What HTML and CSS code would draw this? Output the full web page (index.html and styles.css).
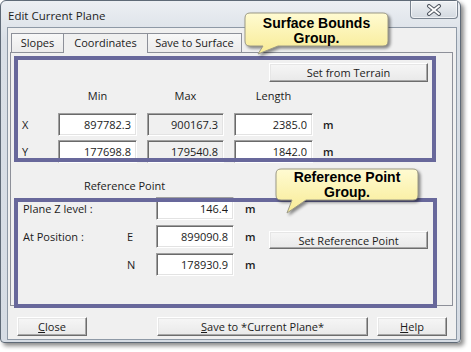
FILE: index.html
```html
<!DOCTYPE html>
<html lang="en">
<head>
    <meta charset="UTF-8">
    <title>Edit Current Plane</title>
    <link rel="stylesheet" href="styles.css">
</head>
<body>
<div class="stage">
    <div class="window">
        <div class="titlebar">
            <span class="title">Edit Current Plane</span>
            <div class="close-btn">
                <svg width="16" height="12" viewBox="0 0 16 12">
                    <path d="M3 2 L13 10 M13 2 L3 10" stroke="#4f5660" stroke-width="4" stroke-linecap="round"/>
                    <path d="M3 2 L13 10 M13 2 L3 10" stroke="#fff" stroke-width="2" stroke-linecap="round"/>
                </svg>
            </div>
        </div>

        <div class="client">
            <div class="tabs">
                <span class="tab tab-slopes">Slopes</span>
                <span class="tab tab-coords active">Coordinates</span>
                <span class="tab tab-save">Save to Surface</span>
            </div>

            <div class="panel">
                <div class="terrain-row">
                    <button class="btn btn-terrain">Set from Terrain</button>
                </div>

                <!-- surface bounds -->
                <div class="bounds">
                    <span></span>
                    <span class="head">Min</span>
                    <span class="head">Max</span>
                    <span class="head">Length</span>
                    <span></span>

                    <span class="axis">X</span>
                    <input class="field" value="897782.3" readonly>
                    <input class="field off" value="900167.3" readonly>
                    <input class="field" value="2385.0" readonly>
                    <span class="unit">m</span>

                    <span class="axis">Y</span>
                    <input class="field" value="177698.8" readonly>
                    <input class="field off" value="179540.8" readonly>
                    <input class="field" value="1842.0" readonly>
                    <span class="unit">m</span>
                </div>

                <div class="ref-title">Reference Point</div>

                <!-- reference point -->
                <div class="ref">
                    <span class="ref-label wide">Plane Z level :</span>
                    <input class="field" value="146.4" readonly>
                    <span class="unit">m</span>
                    <span></span>

                    <span class="ref-label">At Position :</span>
                    <span class="coord">E</span>
                    <input class="field" value="899090.8" readonly>
                    <span class="unit">m</span>
                    <button class="btn btn-ref">Set Reference Point</button>

                    <span></span>
                    <span class="coord">N</span>
                    <input class="field" value="178930.9" readonly>
                    <span class="unit">m</span>
                    <span></span>
                </div>
            </div>

            <div class="footer">
                <button class="btn btn-small"><u>C</u>lose</button>
                <button class="btn btn-save"><u>S</u>ave to *Current Plane*</button>
                <button class="btn btn-small"><u>H</u>elp</button>
            </div>
        </div>
    </div>

    <!-- annotations drawn over the dialog -->
    <div class="mark mark-bounds"></div>
    <div class="mark mark-ref"></div>

    <svg class="callout-shape callout-1" width="152" height="48" viewBox="0 0 152 48">
        <defs>
            <linearGradient id="note1" x1="0" y1="0" x2="0" y2="1">
                <stop offset="0" stop-color="#fffbd2"/>
                <stop offset="1" stop-color="#f8eb94"/>
            </linearGradient>
        </defs>
        <path d="M7 2 H140 Q145 2 145 7 V30 Q145 35 140 35 H35 L15 43 L20 35 H7 Q2 35 2 30 V7 Q2 2 7 2 Z" fill="url(#note1)" stroke="#9c9a86" stroke-width="1"/>
    </svg>
    <div class="callout-text text-1">Surface Bounds<br>Group.</div>

    <svg class="callout-shape callout-2" width="152" height="50" viewBox="0 0 152 50">
        <defs>
            <linearGradient id="note2" x1="0" y1="0" x2="0" y2="1">
                <stop offset="0" stop-color="#fffbd2"/>
                <stop offset="1" stop-color="#f8eb94"/>
            </linearGradient>
        </defs>
        <path d="M7 2 H139 Q144 2 144 7 V28 Q144 33 139 33 H32 L13 46 L18 33 H7 Q2 33 2 28 V7 Q2 2 7 2 Z" fill="url(#note2)" stroke="#9c9a86" stroke-width="1"/>
    </svg>
    <div class="callout-text text-2">Reference Point<br>Group.</div>
</div>
</body>
</html>
```

FILE: styles.css
```css
* {
    box-sizing: border-box;
}
body {
    margin: 0;
    background: #fff;
    font-family: "Open Sans", "Liberation Sans", sans-serif;
    font-size: 11px;
    color: #1b1b1b;
}
.stage {
    position: relative;
    width: 471px;
    height: 352px;
}
.window {
    width: 461px;
    height: 343px;
    border: 1px solid #5f6a77;
    border-radius: 6px 6px 4px 4px;
    background: linear-gradient(#eceff3, #d9dfe6 40px, #d6dce4);
    padding: 0 3px 2px 6px;
    box-shadow: 3px 3px 4px rgba(0,0,0,0.45);
}
.titlebar {
    height: 26px;
    display: flex;
    justify-content: space-between;
    align-items: flex-start;
}
.title {
    padding: 8px 0 0 1px;
    font-size: 11.5px;
    line-height: 14px;
    color: #1e1e1e;
}
.close-btn {
    width: 48px;
    height: 18px;
    margin-right: -1px;
    border: 1px solid #7a8490;
    border-top: none;
    border-radius: 0 0 4px 4px;
    background: linear-gradient(#eef1f4, #d3d9e0);
    box-shadow: inset 0 0 0 1px rgba(255,255,255,0.6);
    display: flex;
    align-items: center;
    justify-content: center;
}
.client {
    height: 313px;
    border: 1px solid #8e99a6;
    background: #f0f0f0;
    padding: 5px 2px 0 2px;
}
.tabs {
    display: flex;
    height: 19px;
    margin-left: 1px;
}
.tab {
    height: 19px;
    line-height: 18px;
    text-align: center;
    border: 1px solid #8d9099;
    border-bottom: none;
    background: linear-gradient(#f8f8f8, #ebebeb);
    margin-left: -1px;
}
.tab:first-child {
    margin-left: 0;
}
.tab-slopes {
    width: 53px;
}
.tab-coords {
    width: 85px;
}
.tab-save {
    width: 95px;
}
.tab.active {
    position: relative;
    z-index: 1;
    height: 20px;
    background: #f0f0f0;
}
.panel {
    width: 443px;
    height: 254px;
    border: 1px solid #8d9099;
    background: #f0f0f0;
}
.btn {
    font-family: inherit;
    font-size: 11px;
    color: #1b1b1b;
    height: 19px;
    padding: 0;
    border: 1px solid;
    border-color: #fff #6d6d6d #6d6d6d #fff;
    background: linear-gradient(#f6f6f6, #e9e9e9);
    box-shadow: inset -1px -1px 0 #a8a8a8, inset 1px 1px 0 #e6e6e6;
}
.terrain-row {
    display: flex;
    justify-content: flex-end;
    padding-right: 24px;
    margin-top: 10px;
}
.btn-terrain {
    width: 159px;
}
.bounds {
    display: grid;
    grid-template-columns: 37px 79px 77px 79px auto;
    column-gap: 10px;
    row-gap: 4px;
    margin-top: 7px;
    align-items: center;
}
.head {
    text-align: center;
    line-height: 14px;
    margin-bottom: 6px;
}
.axis {
    padding-left: 11px;
}
.unit {
    font-weight: 600;
}
.field {
    font-family: inherit;
    font-size: 11px;
    color: #1b1b1b;
    width: 100%;
    height: 23px;
    text-align: right;
    padding: 0 5px 0 0;
    border: 1px solid;
    border-color: #a0a0a0 #fff #fff #a0a0a0;
    box-shadow: inset 1px 1px 0 #6a6a6a, inset -1px -1px 0 #e3e3e3;
    background: #fff;
    outline: none;
}
.field.off {
    background: #f0f0f0;
}
.ref-title {
    width: 227px;
    margin-top: 16px;
    text-align: center;
    line-height: 14px;
}
.ref {
    display: grid;
    grid-template-columns: 116px 29px 78px 35px 159px;
    grid-auto-rows: 23px;
    row-gap: 5px;
    margin-top: 4px;
    align-items: center;
}
.ref-label {
    padding-left: 12px;
}
.ref-label.wide {
    grid-column: 1 / span 2;
}
.ref .unit {
    padding-left: 11px;
}
.btn-ref {
    height: 18px;
    align-self: start;
    margin-top: 6px;
}
.footer {
    display: flex;
    gap: 9px;
    margin-top: 11px;
    padding: 0 7px;
}
.btn-small {
    width: 70px;
}
.btn-save {
    width: 211px;
    margin-left: auto;
}

/* annotation overlays */
.mark {
    position: absolute;
    border: 4px solid #68689b;
}
.mark-bounds {
    left: 14px;
    top: 56px;
    width: 422px;
    height: 106px;
}
.mark-ref {
    left: 14px;
    top: 198px;
    width: 423px;
    height: 110px;
}
.callout-shape {
    position: absolute;
    filter: drop-shadow(2px 2px 1.5px rgba(0,0,0,0.45));
}
.callout-1 {
    left: 243px;
    top: 11px;
}
.callout-2 {
    left: 274px;
    top: 167px;
}
.callout-text {
    position: absolute;
    font-family: "Liberation Sans", Arial, sans-serif;
    font-weight: bold;
    font-size: 14px;
    line-height: 15px;
    text-align: center;
    color: #000;
}
.text-1 {
    left: 245px;
    top: 16px;
    width: 143px;
}
.text-2 {
    left: 276px;
    top: 170px;
    width: 142px;
}
```
